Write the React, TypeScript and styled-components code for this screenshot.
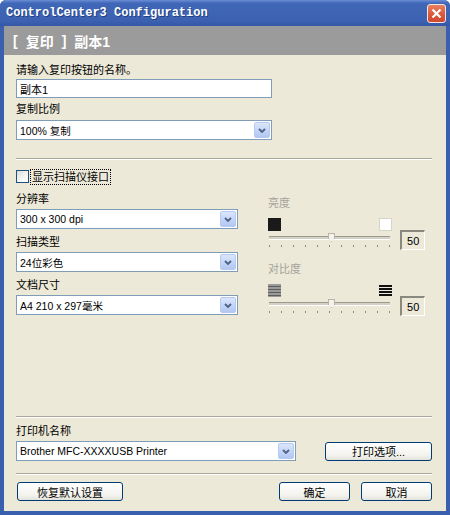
import styled, { createGlobalStyle } from 'styled-components';

const GlobalStyle = createGlobalStyle`
  html, body {
    margin: 0;
    padding: 0;
    background: #ffffff;
  }
  body {
    font-family: "Liberation Sans", "Noto Sans CJK SC", sans-serif;
    font-size: 11px;
    color: #000;
  }
`;

const Window = styled.div`
  width: 450px;
  height: 515px;
  display: flex;
  flex-direction: column;
  background: #3a5fae;
  border-radius: 6px 6px 0 0;
  overflow: hidden;
`;

const TitleBar = styled.div`
  height: 26px;
  flex: none;
  display: flex;
  align-items: center;
  justify-content: space-between;
  padding: 0 4px 0 6px;
  background: linear-gradient(#6a8fd6 0%, #4168b8 12%, #3b61b0 80%, #3558a6 100%);
`;

const TitleText = styled.span`
  font-family: "Liberation Mono", monospace;
  font-weight: bold;
  font-size: 12px;
  color: #ffffff;
  text-shadow: 1px 1px 0 #213f82;
`;

const CloseButton = styled.div`
  width: 19px;
  height: 19px;
  box-sizing: border-box;
  border: 1px solid #f2e6e0;
  border-radius: 3px;
  background: linear-gradient(#e8805f, #d9553a 60%, #cf4a30);
  display: flex;
  align-items: center;
  justify-content: center;
`;

const Frame = styled.div`
  flex: 1;
  display: flex;
  flex-direction: column;
  padding: 0 4px 4px;
`;

const Body = styled.div`
  flex: 1;
  display: flex;
  flex-direction: column;
  background: #ece9d8;
`;

const Header = styled.div`
  height: 29px;
  flex: none;
  display: flex;
  align-items: center;
  gap: 8px;
  padding-left: 9px;
  background: #9b9b9b;
  color: #ffffff;
  font-weight: bold;
  font-size: 14px;
`;

const Content = styled.div`
  flex: 1;
  display: flex;
  flex-direction: column;
  padding: 8px 14px 10px 12px;
`;

const Label = styled.div<{ $muted?: boolean }>`
  height: 14px;
  line-height: 14px;
  color: ${(p) => (p.$muted ? '#a5a29a' : '#000000')};
`;

const Field = styled.div<{ $gap?: number }>`
  display: flex;
  flex-direction: column;
  gap: ${(p) => p.$gap ?? 3}px;
`;

const TextInput = styled.div<{ $width: number }>`
  width: ${(p) => p.$width}px;
  height: 19px;
  box-sizing: border-box;
  border: 1px solid #7f9db9;
  background: #ffffff;
  display: flex;
  align-items: center;
  padding-left: 3px;
  font-size: 11px;
`;

const Combo = styled.div<{ $width: number }>`
  width: ${(p) => p.$width}px;
  height: 20px;
  box-sizing: border-box;
  border: 1px solid #7f9db9;
  background: #ffffff;
  display: flex;
  align-items: center;
  padding: 1px;
`;

const ComboValue = styled.span`
  flex: 1;
  padding-left: 2px;
  font-size: 10.5px;
  white-space: nowrap;
`;

const DropButton = styled.div`
  width: 16px;
  height: 16px;
  box-sizing: border-box;
  border: 1px solid #b6c9ef;
  border-radius: 2px;
  background: linear-gradient(#dbe6fb, #c1d3f6 60%, #b2c7f1);
  display: flex;
  align-items: center;
  justify-content: center;
`;

const Separator = styled.div<{ $top: number; $bottom: number }>`
  height: 0;
  border-top: 1px solid #aca899;
  border-bottom: 1px solid #ffffff;
  margin: ${(p) => p.$top}px 0 ${(p) => p.$bottom}px;
`;

const CheckRow = styled.div`
  display: flex;
  align-items: center;
  gap: 2px;
  height: 15px;
`;

const CheckBox = styled.div`
  width: 13px;
  height: 13px;
  box-sizing: border-box;
  border: 1px solid #1c5180;
  background: linear-gradient(135deg, #dcdcd5, #ffffff 80%);
`;

const FocusLabel = styled.span`
  outline: 1px dotted #000000;
  padding: 0 1px;
  line-height: 14px;
`;

const ScanGrid = styled.div`
  display: grid;
  grid-template-columns: 222px 157px;
  column-gap: 30px;
  margin-top: 8px;
`;

const Column = styled.div`
  display: flex;
  flex-direction: column;
  gap: 6px;
`;

const RightColumn = styled.div`
  display: flex;
  flex-direction: column;
  padding-top: 4px;
`;

const SliderRow = styled.div`
  display: flex;
  align-items: flex-end;
  gap: 8px;
  margin-top: 8px;
`;

const SliderArea = styled.div`
  width: 126px;
  display: flex;
  flex-direction: column;
`;

const IconRow = styled.div`
  display: flex;
  justify-content: space-between;
  height: 13px;
`;

const Swatch = styled.div<{ $color: string }>`
  width: 13px;
  height: 13px;
  box-sizing: border-box;
  background: ${(p) => p.$color};
  border: 1px solid ${(p) => (p.$color === '#ffffff' ? '#d8d5c8' : '#1a1a1a')};
`;

const Track = styled.div`
  position: relative;
  height: 9px;
  margin: 2px 2px 0 1px;
  display: flex;
  align-items: center;
`;

const TrackLine = styled.div`
  flex: 1;
  height: 2px;
  border-top: 1px solid #9d9a8e;
  border-bottom: 1px solid #ffffff;
  background: #d4d0c4;
`;

const Thumb = styled.div`
  position: absolute;
  left: 59px;
  top: 0;
  width: 7px;
  height: 9px;
  background: #f3f2ec;
  border: 1px solid #b8b5a8;
  box-sizing: border-box;
  clip-path: polygon(0 0, 100% 0, 100% 60%, 50% 100%, 0 60%);
`;

const Ticks = styled.div`
  display: flex;
  justify-content: space-between;
  margin: 3px 2px 0 1px;
  height: 3px;
`;

const Tick = styled.div`
  width: 1px;
  height: 2px;
  background: #8d8a80;
`;

const ValueBox = styled.div`
  width: 25px;
  height: 20px;
  box-sizing: border-box;
  border-top: 2px solid #8b887d;
  border-left: 2px solid #8b887d;
  border-right: 1px solid #ffffff;
  border-bottom: 1px solid #ffffff;
  display: flex;
  align-items: center;
  justify-content: center;
  margin-bottom: -2px;
  font-size: 11px;
`;

const BottomSection = styled.div`
  margin-top: auto;
  display: flex;
  flex-direction: column;
`;

const PrintRow = styled.div`
  display: flex;
  align-items: center;
  justify-content: space-between;
  margin-top: 3px;
`;

const Button = styled.div<{ $width: number }>`
  width: ${(p) => p.$width}px;
  height: 19px;
  box-sizing: border-box;
  border: 1px solid #003c74;
  border-radius: 3px;
  background: linear-gradient(#ffffff, #f4f3ee 70%, #e3e2da);
  display: flex;
  align-items: center;
  justify-content: center;
  font-size: 11px;
`;

const ButtonRow = styled.div`
  display: flex;
  gap: 11px;
  padding-left: 1px;
`;

const Spacer = styled.div`
  flex: 1;
`;

const Chevron = () => (
  <svg width="8" height="5" viewBox="0 0 8 5">
    <path d="M1 1 L4 4 L7 1" fill="none" stroke="#4d6185" strokeWidth="1.8" />
  </svg>
);

const Select = ({ width, value }: { width: number; value: string }) => (
  <Combo $width={width}>
    <ComboValue>{value}</ComboValue>
    <DropButton>
      <Chevron />
    </DropButton>
  </Combo>
);

const StripeIcon = ({ dark }: { dark: boolean }) => (
  <svg width="13" height="13" viewBox="0 0 13 13">
    {dark ? (
      [1, 4, 7, 10].map((y) => <rect key={y} x="0" y={y} width="13" height="2" fill="#111" />)
    ) : (
      <>
        <rect x="0" y="0" width="13" height="13" fill="#9a9a9a" />
        {[2, 5, 8, 11].map((y) => (
          <rect key={y} x="0" y={y} width="13" height="1" fill="#5e5e5e" />
        ))}
      </>
    )}
  </svg>
);

const Slider = ({ left, right }: { left: React.ReactNode; right: React.ReactNode }) => (
  <SliderRow>
    <SliderArea>
      <IconRow>
        {left}
        {right}
      </IconRow>
      <Track>
        <TrackLine />
        <Thumb />
      </Track>
      <Ticks>
        {Array.from({ length: 11 }).map((_, i) => (
          <Tick key={i} />
        ))}
      </Ticks>
    </SliderArea>
    <ValueBox>50</ValueBox>
  </SliderRow>
);

export default function App() {
  return (
    <>
      <GlobalStyle />
      <Window>
        <TitleBar>
          <TitleText>ControlCenter3 Configuration</TitleText>
          <CloseButton>
            <svg width="11" height="11" viewBox="0 0 11 11">
              <path d="M1.5 1.5 L9.5 9.5 M9.5 1.5 L1.5 9.5" stroke="#ffffff" strokeWidth="2.2" />
            </svg>
          </CloseButton>
        </TitleBar>
        <Frame>
          <Body>
            <Header>
              <span>[</span>
              <span>复印</span>
              <span>]</span>
              <span>副本1</span>
            </Header>
            <Content>
              <Field $gap={2}>
                <Label>请输入复印按钮的名称。</Label>
                <TextInput $width={256}>副本1</TextInput>
              </Field>
              <Field $gap={4} style={{ marginTop: 4 }}>
                <Label>复制比例</Label>
                <Select width={256} value="100% 复制" />
              </Field>
              <Separator $top={18} $bottom={9} />
              <CheckRow>
                <CheckBox />
                <FocusLabel>显示扫描仪接口</FocusLabel>
              </CheckRow>
              <ScanGrid>
                <Column>
                  <Field>
                    <Label>分辨率</Label>
                    <Select width={222} value="300 x 300 dpi" />
                  </Field>
                  <Field>
                    <Label>扫描类型</Label>
                    <Select width={222} value="24位彩色" />
                  </Field>
                  <Field>
                    <Label>文档尺寸</Label>
                    <Select width={222} value="A4 210 x 297毫米" />
                  </Field>
                </Column>
                <RightColumn>
                  <Label $muted>亮度</Label>
                  <Slider left={<Swatch $color="#1a1a1a" />} right={<Swatch $color="#ffffff" />} />
                  <Label $muted style={{ marginTop: 14 }}>对比度</Label>
                  <Slider left={<StripeIcon dark={false} />} right={<StripeIcon dark />} />
                </RightColumn>
              </ScanGrid>
              <BottomSection>
                <Separator $top={0} $bottom={6} />
                <Label>打印机名称</Label>
                <PrintRow>
                  <Select width={280} value="Brother MFC-XXXXUSB Printer" />
                  <Button $width={107}>打印选项...</Button>
                </PrintRow>
                <Separator $top={12} $bottom={7} />
                <ButtonRow>
                  <Button $width={106}>恢复默认设置</Button>
                  <Spacer />
                  <Button $width={71}>确定</Button>
                  <Button $width={71}>取消</Button>
                </ButtonRow>
              </BottomSection>
            </Content>
          </Body>
        </Frame>
      </Window>
    </>
  );
}
